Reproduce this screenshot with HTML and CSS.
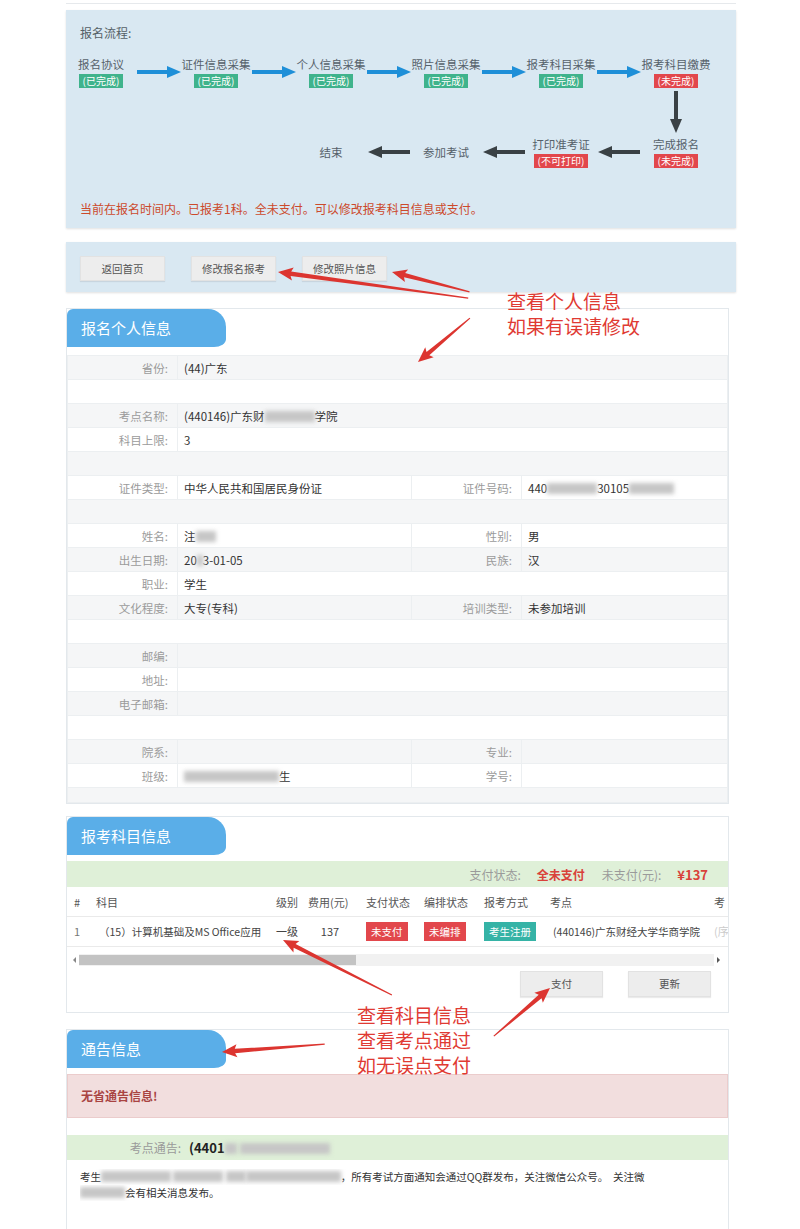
FILE: index.html
```html
<!DOCTYPE html>
<html lang="zh-CN">
<head>
<meta charset="utf-8">
<title>报名信息</title>
<link rel="stylesheet" href="styles.css">
</head>
<body>
<div class="page">
  <div class="topline"></div>

  <section class="flow-panel">
    <div class="flow-title">报名流程:</div>
    <div class="flow-grid">
      <div class="step c1 r1"><span class="lbl">报名协议</span><span class="badge ok">(已完成)</span></div>
      <div class="arr c2 r1"><svg width="44" height="12" viewBox="0 0 44 12"><rect x="0" y="4" width="32" height="4" fill="#1e8fd8"/><polygon points="30,0 44,6 30,12" fill="#1e8fd8"/></svg></div>
      <div class="step c3 r1"><span class="lbl">证件信息采集</span><span class="badge ok">(已完成)</span></div>
      <div class="arr c4 r1"><svg width="44" height="12" viewBox="0 0 44 12"><rect x="0" y="4" width="32" height="4" fill="#1e8fd8"/><polygon points="30,0 44,6 30,12" fill="#1e8fd8"/></svg></div>
      <div class="step c5 r1"><span class="lbl">个人信息采集</span><span class="badge ok">(已完成)</span></div>
      <div class="arr c6 r1"><svg width="44" height="12" viewBox="0 0 44 12"><rect x="0" y="4" width="32" height="4" fill="#1e8fd8"/><polygon points="30,0 44,6 30,12" fill="#1e8fd8"/></svg></div>
      <div class="step c7 r1"><span class="lbl">照片信息采集</span><span class="badge ok">(已完成)</span></div>
      <div class="arr c8 r1"><svg width="44" height="12" viewBox="0 0 44 12"><rect x="0" y="4" width="32" height="4" fill="#1e8fd8"/><polygon points="30,0 44,6 30,12" fill="#1e8fd8"/></svg></div>
      <div class="step c9 r1"><span class="lbl">报考科目采集</span><span class="badge ok">(已完成)</span></div>
      <div class="arr c10 r1"><svg width="44" height="12" viewBox="0 0 44 12"><rect x="0" y="4" width="32" height="4" fill="#1e8fd8"/><polygon points="30,0 44,6 30,12" fill="#1e8fd8"/></svg></div>
      <div class="step c11 r1"><span class="lbl">报考科目缴费</span><span class="badge no">(未完成)</span></div>

      <div class="arr c11 r2"><svg width="12" height="42" viewBox="0 0 12 42"><rect x="4" y="0" width="4" height="30" fill="#3a4145"/><polygon points="0,28 12,28 6,42" fill="#3a4145"/></svg></div>

      <div class="step c5 r3"><span class="lbl">结束</span></div>
      <div class="arr c6 r3"><svg width="42" height="12" viewBox="0 0 42 12"><rect x="12" y="4" width="30" height="4" fill="#3a4145"/><polygon points="14,0 0,6 14,12" fill="#3a4145"/></svg></div>
      <div class="step c7 r3"><span class="lbl">参加考试</span></div>
      <div class="arr c8 r3"><svg width="42" height="12" viewBox="0 0 42 12"><rect x="12" y="4" width="30" height="4" fill="#3a4145"/><polygon points="14,0 0,6 14,12" fill="#3a4145"/></svg></div>
      <div class="step c9 r3"><span class="lbl">打印准考证</span><span class="badge no">(不可打印)</span></div>
      <div class="arr c10 r3"><svg width="42" height="12" viewBox="0 0 42 12"><rect x="12" y="4" width="30" height="4" fill="#3a4145"/><polygon points="14,0 0,6 14,12" fill="#3a4145"/></svg></div>
      <div class="step c11 r3"><span class="lbl">完成报名</span><span class="badge no">(未完成)</span></div>
    </div>
    <p class="flow-msg">当前在报名时间内。已报考1科。全未支付。可以修改报考科目信息或支付。</p>
  </section>

  <section class="btn-panel">
    <button class="btn">返回首页</button>
    <button class="btn">修改报名报考</button>
    <button class="btn">修改照片信息</button>
  </section>

  <section class="card info-card">
    <div class="card-tab">报名个人信息</div>
    <table class="info-table">
      <colgroup><col class="w-lab"><col class="w-val1"><col class="w-lab"><col></colgroup>
      <tr><td class="lab">省份:</td><td class="val" colspan="3">(44)广东</td></tr>
      <tr><td colspan="4"></td></tr>
      <tr><td class="lab">考点名称:</td><td class="val" colspan="3">(440146)广东财<span class="blur b50"></span>学院</td></tr>
      <tr><td class="lab">科目上限:</td><td class="val" colspan="3">3</td></tr>
      <tr><td colspan="4"></td></tr>
      <tr><td class="lab">证件类型:</td><td class="val">中华人民共和国居民身份证</td><td class="lab">证件号码:</td><td class="val">440<span class="blur b50"></span>30105<span class="blur b45"></span></td></tr>
      <tr><td colspan="4"></td></tr>
      <tr><td class="lab">姓名:</td><td class="val">注<span class="blur b20"></span></td><td class="lab">性别:</td><td class="val">男</td></tr>
      <tr><td class="lab">出生日期:</td><td class="val">20<span class="blur b6"></span>3-01-05</td><td class="lab">民族:</td><td class="val">汉</td></tr>
      <tr><td class="lab">职业:</td><td class="val" colspan="3">学生</td></tr>
      <tr><td class="lab">文化程度:</td><td class="val">大专(专科)</td><td class="lab">培训类型:</td><td class="val">未参加培训</td></tr>
      <tr><td colspan="4"></td></tr>
      <tr><td class="lab">邮编:</td><td class="val" colspan="3"></td></tr>
      <tr><td class="lab">地址:</td><td class="val" colspan="3"></td></tr>
      <tr><td class="lab">电子邮箱:</td><td class="val" colspan="3"></td></tr>
      <tr><td colspan="4"></td></tr>
      <tr><td class="lab">院系:</td><td class="val"></td><td class="lab">专业:</td><td class="val"></td></tr>
      <tr><td class="lab">班级:</td><td class="val"><span class="blur b95"></span>生</td><td class="lab">学号:</td><td class="val"></td></tr>
      <tr class="short"><td colspan="4"></td></tr>
    </table>
  </section>

  <section class="card subj-card">
    <div class="card-tab">报考科目信息</div>
    <div class="pay-bar">
      <span class="muted">支付状态:</span><span class="red-strong">全未支付</span>
      <span class="muted">未支付(元):</span><span class="red-strong big">¥137</span>
    </div>
    <div class="tbl-wrap">
      <table class="subj-table">
        <colgroup>
          <col class="sc1"><col class="sc2"><col class="sc3"><col class="sc4"><col class="sc5"><col class="sc6"><col class="sc7"><col class="sc8"><col class="sc9">
        </colgroup>
        <tr class="th">
          <td class="hash">#</td><td>科目</td><td>级别</td><td>费用(元)</td><td>支付状态</td><td>编排状态</td><td>报考方式</td><td>考点</td><td>考</td>
        </tr>
        <tr class="tr">
          <td class="hash">1</td><td class="subj">（15）计算机基础及MS Office应用</td><td>一级</td><td class="center">137</td>
          <td><span class="tag red">未支付</span></td><td><span class="tag red">未编排</span></td><td><span class="tag teal">考生注册</span></td>
          <td class="site">(440146)广东财经大学华商学院</td><td class="faded">(序</td>
        </tr>
      </table>
    </div>
    <div class="hscroll">
      <span class="sb-arrow left"></span>
      <div class="sb-track"><div class="sb-thumb"></div></div>
      <span class="sb-arrow right"></span>
    </div>
    <div class="subj-btns">
      <button class="btn">支付</button>
      <button class="btn">更新</button>
    </div>
  </section>

  <section class="card notice-card">
    <div class="card-tab">通告信息</div>
    <div class="alert">无省通告信息!</div>
    <div class="site-bar"><span class="site-lab">考点通告:</span><span class="site-val">(4401<span class="blur b12"></span> <span class="blur b90"></span></span></div>
    <div class="notice-text">
      <div class="nline">考生<span class="blur b70"></span> <span class="blur b50"></span> <span class="blur b20"></span><span class="blur b95"></span>，所有考试方面通知会通过QQ群发布，关注微信公众号。 &nbsp;关注微</div>
      <div class="nline"><span class="blur b45"></span>会有相关消息发布。</div>
    </div>
  </section>

  <div class="note note1">查看个人信息<br>如果有误请修改</div>
  <div class="note note2">查看科目信息<br>查看考点通过<br>如无误点支付</div>

  <svg class="arrows" width="800" height="1229" viewBox="0 0 800 1229">
    <g fill="#dc3530">
      <g transform="translate(278,272) rotate(7.8)"><polygon points="0,0 15,-6.5 13,-2.2 192,-0.6 192,0.6 13,2.2 15,6.5"/></g>
      <g transform="translate(392,272) rotate(14.4)"><polygon points="0,0 15,-6.5 13,-2.2 80,-0.6 80,0.6 13,2.2 15,6.5"/></g>
      <g transform="translate(418,362) rotate(-40.2)"><polygon points="0,0 15,-6.5 13,-2.2 68,-0.6 68,0.6 13,2.2 15,6.5"/></g>
      <g transform="translate(283,940) rotate(26.8)"><polygon points="0,0 15,-6.5 13,-2.2 122,-0.6 122,0.6 13,2.2 15,6.5"/></g>
      <g transform="translate(550,988) rotate(139.4)"><polygon points="0,0 15,-6.5 13,-2.2 74,-0.6 74,0.6 13,2.2 15,6.5"/></g>
      <g transform="translate(222,1052) rotate(-4.4)"><polygon points="0,0 15,-6.5 13,-2.2 103,-0.6 103,0.6 13,2.2 15,6.5"/></g>
    </g>
  </svg>
</div>
</body>
</html>
```

FILE: styles.css
```css
* { box-sizing: border-box; }

body {
  margin: 0;
  background: #ffffff;
  font-family: "Noto Sans CJK SC", "Noto Sans", sans-serif;
  color: #333;
}

.page {
  position: relative;
  width: 800px;
  min-height: 1229px;
  padding-left: 66px;
  overflow: hidden;
}

.topline {
  width: 670px;
  height: 4px;
  border-bottom: 1px solid #e6e9ec;
}

/* ---------- flow panel ---------- */
.flow-panel {
  width: 670px;
  margin-top: 6px;
  background: #d9e8f2;
  padding: 15px 0 11px;
  box-shadow: 0 1px 2px rgba(0, 0, 0, 0.12);
}

.flow-title {
  padding-left: 14px;
  font-size: 12px;
  line-height: 16px;
  color: #555f66;
}

.flow-grid {
  display: grid;
  grid-template-columns: 70px 45px 70px 45px 70px 45px 70px 45px 70px 45px 70px;
  grid-template-rows: 34px 46px 34px;
  margin-top: 14px;
}

.c1 { grid-column: 1; } .c2 { grid-column: 2; } .c3 { grid-column: 3; }
.c4 { grid-column: 4; } .c5 { grid-column: 5; } .c6 { grid-column: 6; }
.c7 { grid-column: 7; } .c8 { grid-column: 8; } .c9 { grid-column: 9; }
.c10 { grid-column: 10; } .c11 { grid-column: 11; }
.r1 { grid-row: 1; } .r2 { grid-row: 2; } .r3 { grid-row: 3; }

.step {
  display: flex;
  flex-direction: column;
  align-items: center;
  justify-content: center;
  gap: 2px;
  white-space: nowrap;
}

.step .lbl {
  font-size: 11.5px;
  line-height: 16px;
  color: #56616a;
}

.badge {
  font-size: 10px;
  line-height: 14px;
  padding: 0 4px;
  color: #fff;
}
.badge.ok { background: #3fb38c; }
.badge.no { background: #e2474c; }

.arr {
  display: flex;
  align-items: center;
  justify-content: center;
}
.arr svg { display: block; }

.flow-msg {
  margin: 32px 0 0;
  padding-left: 14px;
  font-size: 12px;
  line-height: 16px;
  color: #cc4a2c;
}

/* ---------- button panel ---------- */
.btn-panel {
  width: 670px;
  margin-top: 14px;
  background: #d9e8f2;
  padding: 14px 14px 11px;
  display: flex;
  gap: 26px;
  box-shadow: 0 1px 2px rgba(0, 0, 0, 0.12);
}

.btn {
  width: 85px;
  height: 25px;
  border: 1px solid #e2e2e2;
  background: #ededed;
  font-family: inherit;
  font-size: 10.5px;
  color: #555;
  padding: 0;
  box-shadow: 0 1px 1px rgba(0, 0, 0, 0.08);
}

/* ---------- cards ---------- */
.card {
  width: 663px;
  border: 1px solid #e3e8ec;
  background: #fff;
}

.card-tab {
  width: 159px;
  height: 38px;
  background: #5aaee8;
  color: #fff;
  font-size: 15px;
  line-height: 38px;
  padding-left: 14px;
  border-radius: 6px 18px 12px 0 / 6px 18px 8px 0;
}

.info-card {
  margin-top: 16px;
}

.info-table {
  width: 100%;
  margin-top: 8px;
  border-collapse: collapse;
  table-layout: fixed;
  font-size: 11.5px;
}
.w-lab { width: 110px; }
.w-val1 { width: 234px; }

.info-table td {
  height: 24px;
  padding: 0 6px;
  border: 1px solid #eceff1;
  white-space: nowrap;
  overflow: hidden;
}
.info-table tr:nth-child(odd) td { background: #f5f6f7; }
.info-table tr.short td { height: 15px; }
.info-table .lab {
  text-align: right;
  color: #9b9b9b;
  padding-right: 9px;
}
.info-table .val { color: #333; }

.blur {
  display: inline-block;
  height: 11px;
  vertical-align: -1px;
  background: #c6c6c6;
  filter: blur(2px);
}
.b6 { width: 6px; } .b12 { width: 12px; } .b20 { width: 20px; }
.b45 { width: 45px; } .b50 { width: 50px; } .b70 { width: 70px; }
.b90 { width: 90px; } .b95 { width: 95px; }

/* ---------- subject card ---------- */
.subj-card {
  margin-top: 12px;
  padding-bottom: 15px;
}

.pay-bar {
  margin-top: 6px;
  height: 26px;
  background: #dff0d8;
  display: flex;
  align-items: center;
  justify-content: flex-end;
  gap: 0;
  padding-right: 20px;
  font-size: 12px;
}
.pay-bar .muted { color: #9a9a9a; margin-right: 16px; }
.pay-bar .red-strong { color: #d9423a; font-weight: bold; margin-right: 17px; }
.pay-bar .red-strong.big { font-size: 13px; margin-right: 0; }

.tbl-wrap {
  overflow: hidden;
  margin-top: 2px;
}

.subj-table {
  width: 700px;
  border-collapse: collapse;
  table-layout: fixed;
  font-size: 11px;
}
.sc1 { width: 22px; } .sc2 { width: 180px; } .sc3 { width: 32px; }
.sc4 { width: 58px; } .sc5 { width: 58px; } .sc6 { width: 60px; }
.sc7 { width: 66px; } .sc8 { width: 164px; } .sc9 { width: 60px; }

.subj-table td {
  padding: 0 0 0 7px;
  white-space: nowrap;
  overflow: hidden;
  border-bottom: 1px solid #eaeaea;
  color: #444;
}
.subj-table .th td { height: 27px; color: #555; }
.subj-table .tr td { height: 30px; }
.subj-table .hash { padding-left: 7px; color: #777; }
.subj-table .subj { padding-left: 10px; font-size: 10.5px; }
.subj-table .center { text-align: center; padding-left: 0; }
.subj-table .site { font-size: 10.5px; padding-left: 10px; }
.subj-table .faded { color: #ccc; }

.tag {
  display: inline-block;
  height: 19px;
  line-height: 19px;
  padding: 0 5px;
  color: #fff;
  font-size: 10.5px;
}
.tag.red { background: #e2474c; }
.tag.teal { background: #35b3a6; }

.hscroll {
  display: flex;
  align-items: center;
  height: 14px;
  margin: 6px 8px 0 6px;
  gap: 3px;
}
.sb-arrow {
  width: 0;
  height: 0;
  border-top: 3px solid transparent;
  border-bottom: 3px solid transparent;
}
.sb-arrow.left { border-right: 3px solid #888; }
.sb-arrow.right { border-left: 3px solid #555; }
.sb-track {
  flex: 1;
  height: 12px;
  background: #f1f1f1;
  display: flex;
  align-items: center;
}
.sb-thumb {
  width: 277px;
  height: 10px;
  background: #c3c3c3;
}

.subj-btns {
  display: flex;
  justify-content: flex-end;
  gap: 25px;
  padding-right: 17px;
  margin-top: 4px;
}
.subj-btns .btn { width: 83px; height: 26px; }

/* ---------- notice card ---------- */
.notice-card {
  margin-top: 16px;
  min-height: 210px;
  border-bottom: none;
}

.alert {
  margin-top: 6px;
  height: 44px;
  background: #f2dede;
  border: 1px solid #ebcccc;
  display: flex;
  align-items: center;
  padding-left: 13px;
  font-size: 12px;
  font-weight: bold;
  color: #a94442;
}

.site-bar {
  margin-top: 17px;
  height: 25px;
  background: #dff0d8;
  display: flex;
  align-items: center;
  font-size: 12px;
}
.site-lab {
  width: 114px;
  text-align: right;
  color: #9a9a9a;
}
.site-val {
  margin-left: 8px;
  font-weight: bold;
  font-size: 13px;
  color: #222;
}

.notice-text {
  margin-top: 9px;
  padding-left: 13px;
  font-size: 10.5px;
  line-height: 16px;
  color: #333;
}
.nline {
  white-space: nowrap;
  overflow: hidden;
}

/* ---------- annotations ---------- */
.note {
  position: absolute;
  font-size: 19px;
  line-height: 25px;
  color: #e03a33;
  white-space: nowrap;
}
.note1 { left: 507px; top: 288px; }
.note2 { left: 357px; top: 1002px; }

.arrows {
  position: absolute;
  left: 0;
  top: 0;
  pointer-events: none;
}
```
